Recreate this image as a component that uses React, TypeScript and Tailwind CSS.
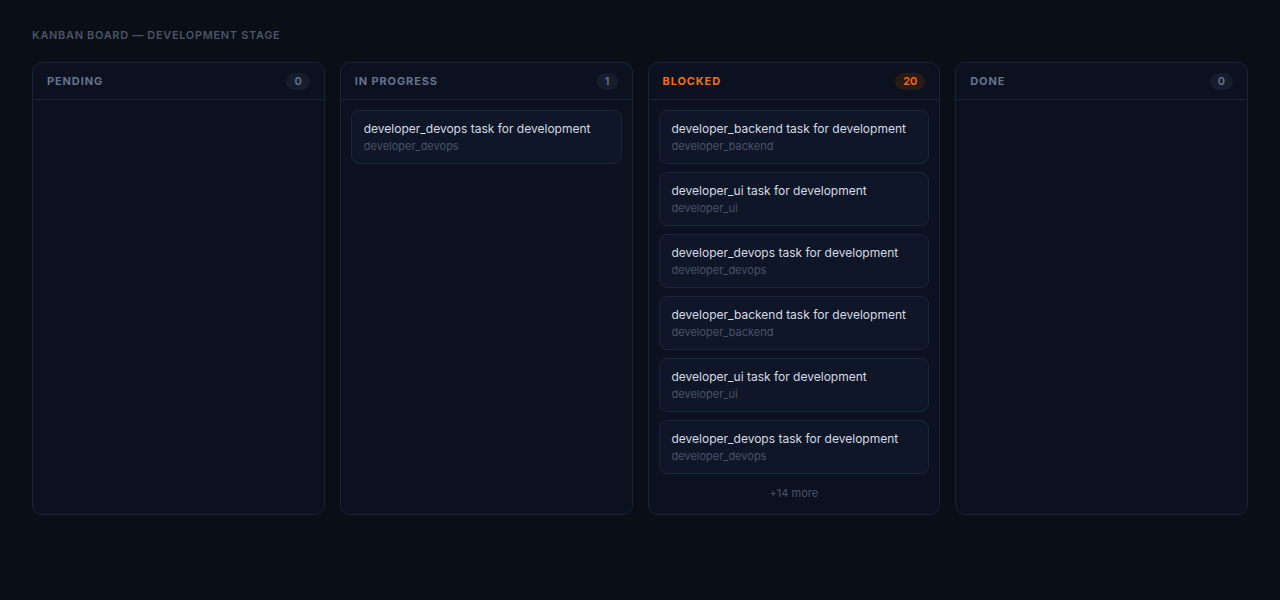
type Task = { title: string; owner: string }

type Column = {
  name: string
  count: number
  tasks: Task[]
  more?: number
  accent?: boolean
}

const task = (owner: string): Task => ({ title: `${owner} task for development`, owner })

const columns: Column[] = [
  { name: "Pending", count: 0, tasks: [] },
  { name: "In Progress", count: 1, tasks: [task("developer_devops")] },
  {
    name: "Blocked",
    count: 20,
    accent: true,
    more: 14,
    tasks: [
      task("developer_backend"),
      task("developer_ui"),
      task("developer_devops"),
      task("developer_backend"),
      task("developer_ui"),
      task("developer_devops"),
    ],
  },
  { name: "Done", count: 0, tasks: [] },
]

export default function App() {
  return (
    <div className="min-h-[600px] bg-[#0a0e17] px-8 pt-[28px] font-['Inter',sans-serif]">
      <h1 className="text-[11px] font-semibold uppercase leading-[14px] tracking-[0.06em] text-[#4a5568]">
        Kanban Board — Development Stage
      </h1>

      <div className="mt-[20px] grid grid-cols-4 gap-[15px]">
        {columns.map((col) => (
          <div
            key={col.name}
            className="flex flex-col rounded-[10px] border border-[#1b2335] bg-[#0c1120]"
          >
            <div className="flex h-[37px] items-center justify-between border-b border-[#1b2335] px-3.5">
              <span
                className={
                  col.accent
                    ? "text-[11px] font-bold uppercase tracking-[0.08em] text-[#f0701e]"
                    : "text-[11px] font-bold uppercase tracking-[0.08em] text-[#64748b]"
                }
              >
                {col.name}
              </span>
              <span
                className={
                  col.accent
                    ? "rounded-full bg-[#2a1a14] px-2 text-[11px] font-semibold leading-[17px] text-[#f0701e]"
                    : "rounded-full bg-[#161d2c] px-2 text-[11px] font-semibold leading-[17px] text-[#64748b]"
                }
              >
                {col.count}
              </span>
            </div>

            <div className="flex flex-col gap-2 p-2.5">
              {col.tasks.map((t, i) => (
                <div
                  key={i}
                  className="rounded-lg border border-[#1c2538] bg-[#0f1627] px-3 pt-2 pb-[9px]"
                >
                  <p className="text-[12px] leading-[19px] text-[#d5dbe5]">{t.title}</p>
                  <p className="text-[11px] leading-4 text-[#475467]">{t.owner}</p>
                </div>
              ))}
              {col.more ? (
                <div className="py-[3px] text-center text-[11px] leading-4 text-[#4a5566]">
                  +{col.more} more
                </div>
              ) : null}
            </div>
          </div>
        ))}
      </div>
    </div>
  )
}
